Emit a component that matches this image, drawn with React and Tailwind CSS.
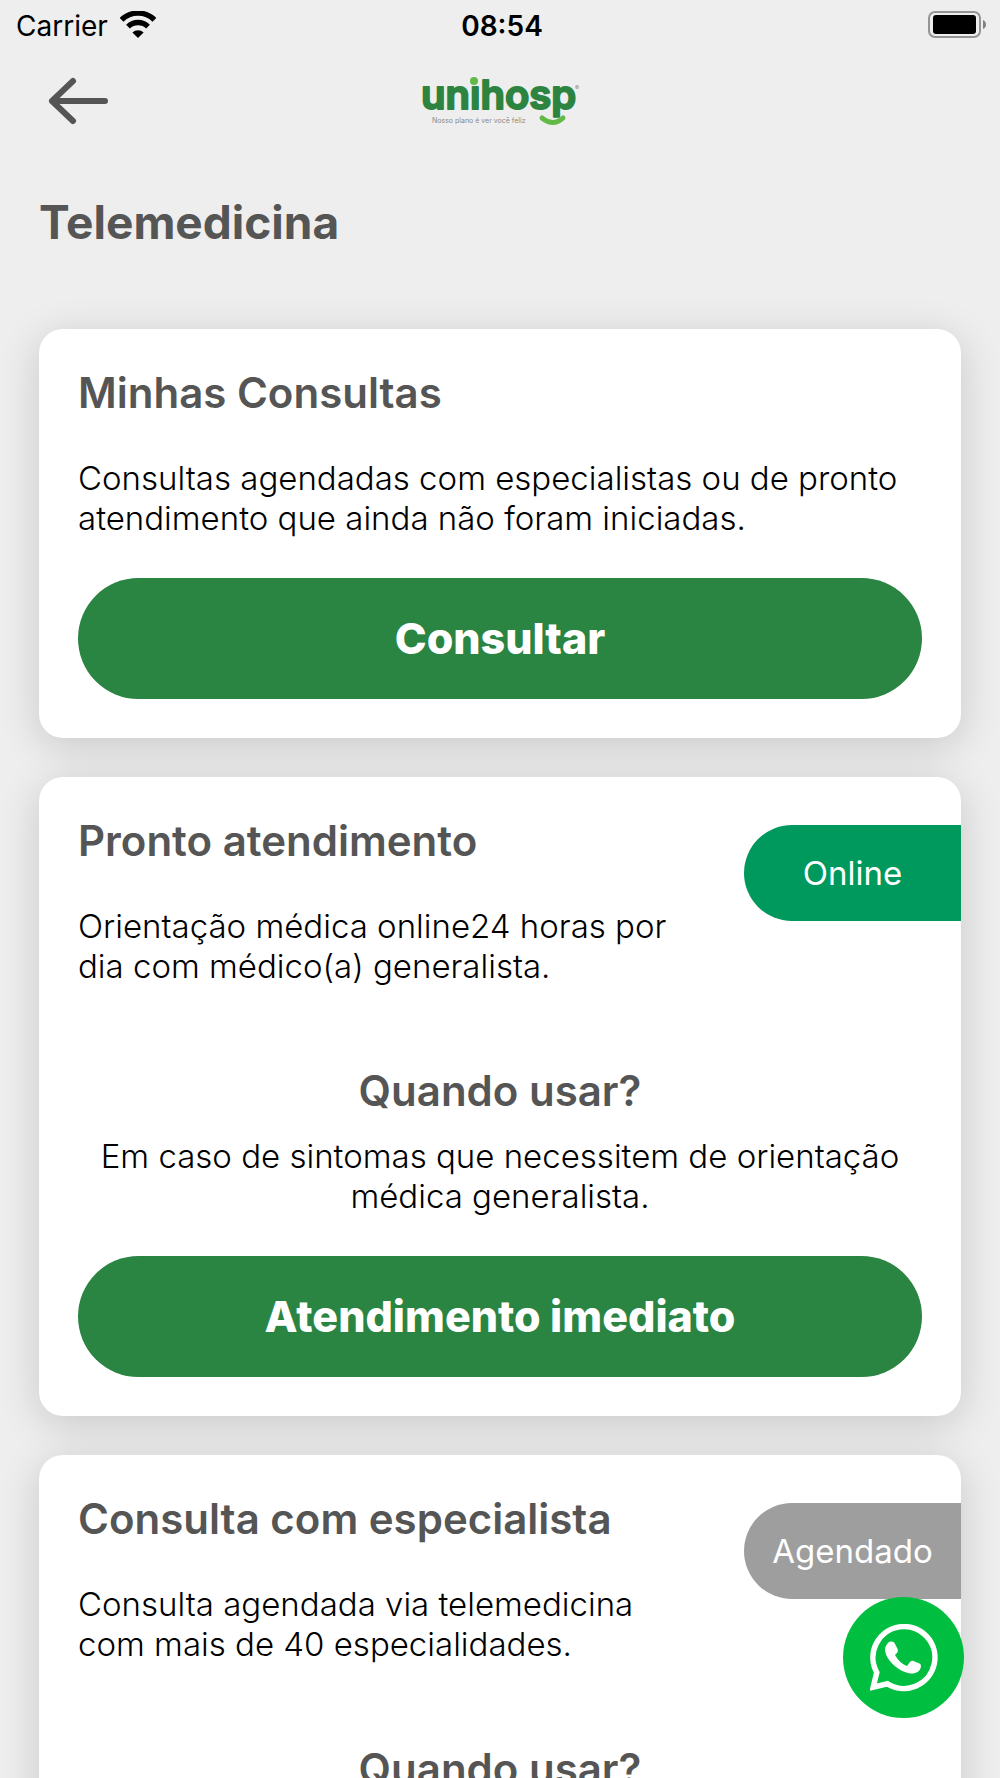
import React from "react";

const cards = [
  {
    title: "Minhas Consultas",
    text: "Consultas agendadas com especialistas ou de pronto atendimento que ainda não foram iniciadas.",
    action: "Consultar",
  },
  {
    title: "Pronto atendimento",
    text: "Orientação médica online24 horas por dia com médico(a) generalista.",
    badge: { label: "Online", color: "bg-[#00995d]" },
    usage: "Em caso de sintomas que necessitem de orientação médica generalista.",
    action: "Atendimento imediato",
  },
  {
    title: "Consulta com especialista",
    text: "Consulta agendada via telemedicina com mais de 40 especialidades.",
    badge: { label: "Agendado", color: "bg-[#9e9e9e]" },
    usage: "",
  },
];

const WifiIcon = () => (
  <svg viewBox="0 0 36 27" className="-mt-1 h-[27px] w-9" aria-hidden="true">
    <g fill="none" stroke="#000" strokeWidth="5.4">
      <path d="M1.6 8.8a23.4 23.4 0 0 1 32.8 0" />
      <path d="M8 15.6a14.4 14.4 0 0 1 20 0" />
    </g>
    <path d="M18 27l-5.6-5.4a8 8 0 0 1 11.2 0z" />
  </svg>
);

const BatteryIcon = () => (
  <svg viewBox="0 0 60 27" className="-mt-1 h-[27px] w-[60px]" aria-hidden="true">
    <rect x="1" y="1" width="51" height="25" rx="6" fill="none" stroke="#949494" strokeWidth="2" />
    <rect x="5" y="4" width="43" height="19" rx="3" />
    <path d="M55 9q3 1.5 3 4.5t-3 4.5z" fill="#808080" />
  </svg>
);

const StatusBar = () => (
  <div className="grid grid-cols-3 items-center pt-[2px] pr-3 pl-4 text-[28px] leading-[48px] text-black">
    <div className="flex items-center gap-3">
      <span>Carrier</span>
      <WifiIcon />
    </div>
    <span className="text-center font-semibold">08:54</span>
    <div className="flex justify-end">
      <BatteryIcon />
    </div>
  </div>
);

const Logo = () => (
  <svg viewBox="0 0 160 52" className="h-[52px] w-40 overflow-visible" role="img" aria-label="unihosp">
    <text
      x="1"
      y="33"
      fontSize="40"
      fontWeight="600"
      fill="#2c8440"
      stroke="#2c8440"
      strokeWidth="2"
      strokeLinejoin="round"
    >
      unihosp
    </text>
    <rect x="48" y="0" width="12" height="9" fill="#eeeeee" />
    <circle cx="54" cy="5" r="4" fill="#62b946" />
    <text x="155" y="14" fontSize="6" fill="#8a8a8a">
      ®
    </text>
    <text x="12" y="47" fontSize="7" fill="#8a8a8a">
      Nosso plano é ver você feliz
    </text>
    <path d="M122 42q11 9 21 0" fill="none" stroke="#62b946" strokeWidth="5" strokeLinecap="round" />
  </svg>
);

const Header = () => (
  <header className="grid grid-cols-3 items-center px-[39px] pt-6">
    <button aria-label="Voltar" className="w-20">
      <svg viewBox="0 0 80 56" className="h-14 w-20" aria-hidden="true">
        <path
          d="M34 7L13 27l21 20M13 27h53"
          fill="none"
          stroke="#555"
          strokeWidth="6"
          strokeLinecap="round"
          strokeLinejoin="round"
        />
      </svg>
    </button>
    <div className="flex justify-center">
      <Logo />
    </div>
  </header>
);

const Card = ({ title, text, badge, usage, action }) => (
  <section className="rounded-3xl bg-white p-[39px] shadow-[0_8px_40px_rgba(0,0,0,0.16)]">
    <div className="flex items-start gap-[39px]">
      <div className="flex-1">
        <h2 className="text-[42px] leading-[50px] font-semibold text-[#555]">{title}</h2>
        <p className="mt-10 text-[33px] leading-10 font-light text-black">{text}</p>
      </div>
      {badge && (
        <div
          className={`mt-[9px] -mr-[39px] w-[217px] rounded-l-full text-center text-[33px] leading-[96px] text-white ${badge.color}`}
        >
          {badge.label}
        </div>
      )}
    </div>

    {badge && (
      <div className="mt-20 text-center">
        <h3 className="text-[42px] leading-[50px] font-semibold text-[#555]">Quando usar?</h3>
        {usage && <p className="mt-5 text-[33px] leading-10 font-light text-black">{usage}</p>}
      </div>
    )}

    {action && (
      <button className="mt-10 h-[121px] w-full rounded-full bg-[#2a8442] text-[43px] font-extrabold text-white">
        {action}
      </button>
    )}
  </section>
);

const WhatsAppButton = () => (
  <button
    aria-label="WhatsApp"
    className="fixed right-9 bottom-[60px] flex size-[121px] items-center justify-center rounded-full bg-[#00bf40]"
  >
    <svg viewBox="0 0 68 68" className="size-[68px]" aria-hidden="true">
      <path
        d="M3.2 63.2L6.8 48.5A31 31 0 1 1 17.500 59.800z"
        fill="none"
        stroke="#fff"
        strokeWidth="5.5"
      />
      <path
        d="M18 19c2-2 6-2 7 1l2.600 5c.8 3-.6 4-2.600 6 3.500 6 7 9 12 11l3-4c1-1 2-1.500 3.500-1l6 2.500c1.500.8 1.700 1.800 1.300 3.800-1 5-6 7-12 6C28 47 17 37 15 27c-.5-3 1-6 3-8z"
        fill="#fff"
      />
    </svg>
  </button>
);

const App = () => {
  return (
    <div className="h-screen overflow-hidden bg-[#eeeeee] font-['Inter','Liberation_Sans',sans-serif]">
      <StatusBar />
      <Header />
      <main className="px-[39px] pt-[62px]">
        <h1 className="text-[46px] leading-[60px] font-bold text-[#555]">Telemedicina</h1>
        <div className="mt-[77px] flex flex-col gap-[39px]">
          {cards.map((card) => (
            <Card key={card.title} {...card} />
          ))}
        </div>
      </main>
      <WhatsAppButton />
    </div>
  );
};

export default App;
